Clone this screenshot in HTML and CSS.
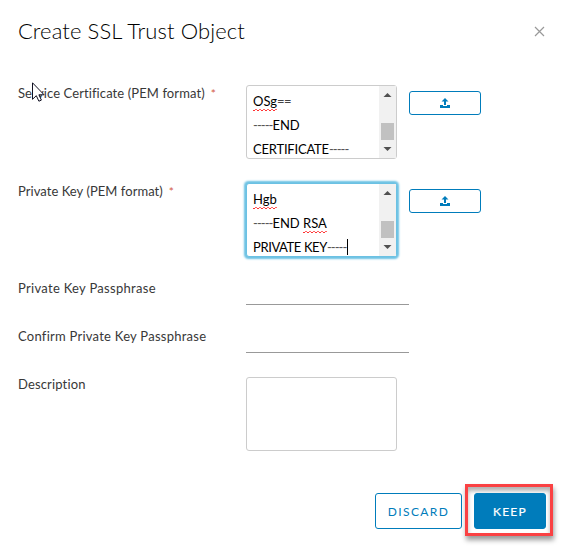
FILE: index.html
```html
<!DOCTYPE html>
<html lang="en">
<head>
<meta charset="utf-8">
<title>Create SSL Trust Object</title>
<link rel="stylesheet" href="styles.css">
</head>
<body>
<main class="dialog">
  <header class="header">
    <h1 class="title">Create SSL Trust Object</h1>
    <svg class="close" viewBox="0 0 11 11"><path d="M1 1l9 9M10 1l-9 9"/></svg>
  </header>
  <form class="form">
    <div class="row row-tall">
      <label class="label label-service">Service Certificate (PEM format)<span class="required">*</span></label>
      <div class="area">
        <div class="lines">
          <div><span class="misspelt">OSg</span><span class="equals">==</span></div>
          <div><span class="dashes">-----</span>END</div>
          <div><span class="cert">CERTIFICATE</span><span class="dashes">-----</span></div>
        </div>
        <svg class="scrollbar" viewBox="0 0 17 72"><path class="track" d="M0 0h17v72H0z"/><path class="thumb" d="M2 37h13v17H2z"/><path class="arrow" d="M4.500 11l4-4 4 4zM4.500 61h8l-4 4z"/></svg>
      </div>
      <div class="upload"><svg class="upload-icon" viewBox="0 0 12 12"><path d="M6 1l3.500 3.500H7V8H5V4.500H2.500zM1 8h3v1h4V8h3v3H1z"/></svg></div>
    </div>
    <div class="row row-key">
      <label class="label label-key">Private Key (PEM format)<span class="required">*</span></label>
      <div class="area focused">
        <div class="lines">
          <div><span class="misspelt hgb">Hgb</span></div>
          <div><span class="dashes">-----</span>END <span class="misspelt">RSA</span></div>
          <div class="caret-line"><span class="private">PRIVATE KEY</span><span class="dashes">-----</span><span class="caret"></span></div>
        </div>
        <svg class="scrollbar" viewBox="0 0 17 72"><path class="track" d="M0 0h17v72H0z"/><path class="thumb" d="M2 37h13v17H2z"/><path class="arrow" d="M4.500 11l4-4 4 4zM4.500 61h8l-4 4z"/></svg>
      </div>
      <div class="upload"><svg class="upload-icon" viewBox="0 0 12 12"><path d="M6 1l3.500 3.500H7V8H5V4.500H2.500zM1 8h3v1h4V8h3v3H1z"/></svg></div>
    </div>
    <div class="row row-line">
      <label class="label label-pass">Private Key Passphrase</label>
      <div class="input"></div>
    </div>
    <div class="row row-line">
      <label class="label label-confirm">Confirm Private Key Passphrase</label>
      <div class="input"></div>
    </div>
    <div class="row">
      <label class="label label-desc">Description</label>
      <div class="area"></div>
    </div>
  </form>
  <footer class="footer">
    <div class="button discard">DISCARD</div>
    <div class="highlight"><div class="button keep">KEEP</div></div>
  </footer>
  <svg class="cursor" viewBox="0 0 13 20"><path d="M.5.8v16.500l3.800-3.600 2.600 5.500 2.500-1.100-2.500-5.300h5.200z"/></svg>
</main>
</body>
</html>
```

FILE: styles.css
```css
* { box-sizing: border-box; }
body { margin: 0; background: #fff; font-family: Lato, "Liberation Sans", sans-serif; }
.dialog { position: relative; width: 567px; height: 549px; overflow: hidden; }
.header { display: flex; justify-content: space-between; height: 85px; padding: 17px 22px 0 18px; }
.title { margin: 0; font-size: 22px; line-height: 28px; font-weight: 300; color: #000; letter-spacing: .1px; white-space: nowrap; }
.close { width: 11px; height: 11px; margin-top: 9px; fill: none; stroke: #999; stroke-width: 1.2; }
.row { display: grid; grid-template-columns: 228px 151px 84px; padding-left: 18px; align-items: start; }
.row-tall { height: 98px; }
.row-key { height: 96px; }
.row-line { height: 48px; }
.label { font-size: 13px; line-height: 16px; color: #383838; letter-spacing: .1px; white-space: nowrap; }
.label-key { letter-spacing: .05px; }
.label-pass { letter-spacing: .3px; }
.label-confirm { letter-spacing: .25px; }
.label-desc { letter-spacing: .15px; padding-top: 1px; }
.required { color: #d35a45; margin-left: 6px; font-size: 12px; }
.row-line .label { padding-top: 1px; }
.area { display: flex; justify-content: space-between; width: 151px; height: 74px; border: 1px solid #ccc; border-radius: 3px; background: #fff; }
.focused { border-color: #6bc1e3; box-shadow: 0 0 2px 1.5px #6bc1e3; }
.lines { padding: 3px 0 0 6px; height: 72px; font-size: 13px; line-height: 24px; color: #000; white-space: nowrap; }
.lines > div { height: 24px; line-height: 24px; }
.misspelt {
  padding-bottom: 2px;
  background:
    linear-gradient(90deg, #f33 2px, transparent 2px) 0 100% / 4px 1px repeat-x,
    linear-gradient(90deg, #f66 2px, transparent 2px) 2px calc(100% - 1px) / 4px 1px repeat-x;
}
.equals { letter-spacing: -.6px; color: #444; }
.cert { letter-spacing: -.2px; }
.private { letter-spacing: -.4px; }
.dashes { letter-spacing: -.95px; color: #555; }
.caret-line { display: flex; align-items: center; }
.caret { width: 1px; height: 16px; margin-left: 1px; background: #000; }
.scrollbar { width: 17px; height: 72px; flex: none; }
.track { fill: #f1f1f1; }
.thumb { fill: #c1c1c1; }
.arrow { fill: #505050; }
.upload { display: flex; align-items: center; justify-content: center; width: 72px; height: 24px; margin: 6px 0 0 12px; border: 1px solid #007cbb; border-radius: 3px; }
.upload-icon { width: 12px; height: 12px; fill: #007cbb; }
.input { width: 163px; height: 26px; border-bottom: 1px solid #999; }
.row:last-child .area { margin-top: 2px; }
.footer { display: flex; align-items: center; justify-content: flex-end; margin-top: 33px; padding-right: 14px; }
.button { display: flex; align-items: center; justify-content: center; height: 36px; border: 1px solid #007cbb; border-radius: 3px; font-size: 12px; letter-spacing: 1.4px; color: #007cbb; }
.discard { width: 87px; margin-top: 2px; }
.highlight { width: 88px; height: 52px; margin-left: 3px; padding: 6px; border: 3px solid #fa4143; box-shadow: 1px 4px 5px rgba(0,0,0,.4), inset 0 4px 4px rgba(0,0,0,.3); }
.keep { width: 72px; background: #007cbb; color: #fff; -webkit-text-stroke: .2px #fff; letter-spacing: 1.3px; }
.cursor { position: absolute; left: 32px; top: 82px; width: 13px; height: 20px; fill: #fff; stroke: #112; stroke-width: 1; }
```
